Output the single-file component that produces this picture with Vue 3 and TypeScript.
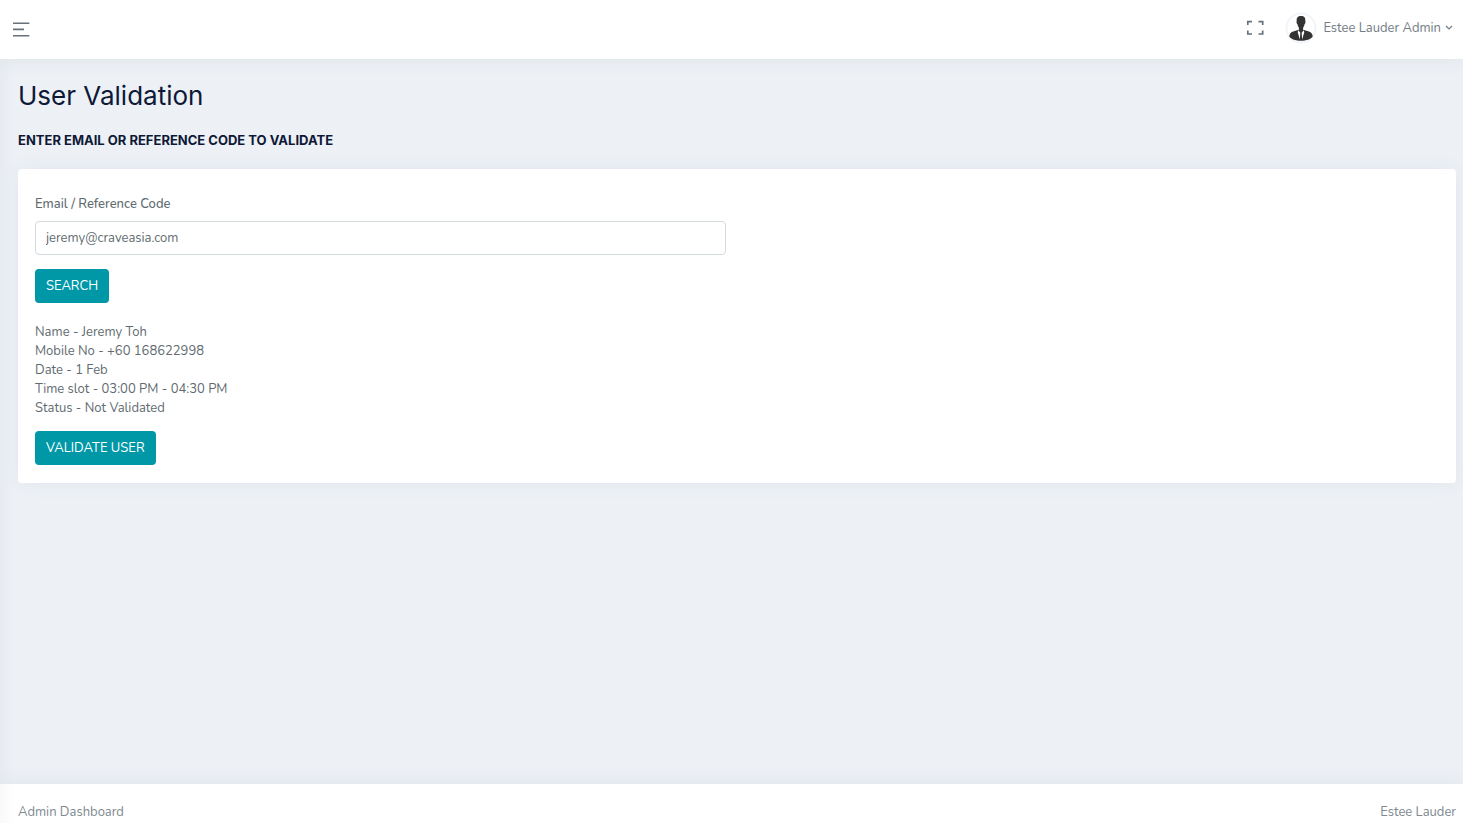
<script setup lang="ts">
import { ref } from 'vue'

interface Detail {
  label: string
  value: string
}

const query = ref<string>('jeremy@craveasia.com')
const details: Detail[] = [
  { label: 'Name', value: 'Jeremy Toh' },
  { label: 'Mobile No', value: '+60 168622998' },
  { label: 'Date', value: '1 Feb' },
  { label: 'Time slot', value: '03:00 PM - 04:30 PM' },
  { label: 'Status', value: 'Not Validated' },
]
</script>

<template>
  <div class="page">
    <header class="topbar">
      <button class="icon-button" type="button" aria-label="Toggle menu">
        <svg width="18" height="16" viewBox="0 0 18 16" fill="none" stroke="currentColor" stroke-width="1.6">
          <path d="M1 1.200h16.300M1 7.400h11M1 13.700h16.300" />
        </svg>
      </button>
      <div class="tools">
        <button class="icon-button" type="button" aria-label="Full screen">
          <svg width="18" height="16" viewBox="0 0 18 16" fill="none" stroke="currentColor" stroke-width="1.7">
            <path d="M1.800 5V1.600h4.200M12.500 1.600h4.200V5M16.700 10.600V14h-4.200M6 14H1.800v-3.400" />
          </svg>
        </button>
        <button class="account" type="button">
          <svg class="avatar" width="32" height="32" viewBox="0 0 32 32">
            <circle cx="16" cy="16" r="14.5" fill="#fff" stroke="#f1f5f9" stroke-width="2" />
            <path d="M16 4c-3.300 0-4.600 1.900-4.300 4.900-.5 1.400.1 2.700.7 3.200.3 2 .9 3 1.500 3.700v2l-5 1.500c-3.200.9-4.500 2.700-4.600 5.200 1.700 2.800 6.400 4.200 11.700 4.200s10-1.400 11.700-4.200c-.1-2.500-1.400-4.300-4.600-5.200l-5-1.500v-2c.6-.7 1.200-1.700 1.500-3.700.6-.5 1.200-1.800.7-3.200.3-3-1-4.900-4.300-4.900z" fill="#333" />
            <path d="M13.400 18.200 12.700 20.200l2.200 7.300.4-6.800zM18.600 18.200l.7 2-2.200 7.300-.4-6.800z" fill="#fff" />
          </svg>
          <span>Estee Lauder Admin</span>
          <svg class="chevron" width="8" height="6" viewBox="0 0 8 6" fill="none" stroke="currentColor" stroke-width="1.2">
            <path d="M1 1 4 4 7 1" />
          </svg>
        </button>
      </div>
    </header>

    <main class="content">
      <h1>User Validation</h1>
      <h2>ENTER EMAIL OR REFERENCE CODE TO VALIDATE</h2>
      <section class="card">
        <form class="search" @submit.prevent>
          <div class="field">
            <label for="query">Email / Reference Code</label>
            <input id="query" v-model="query" type="text" />
          </div>
          <button class="primary" type="submit">SEARCH</button>
        </form>
        <div class="details">
          <p v-for="item in details" :key="item.label">{{ item.label }} - {{ item.value }}</p>
        </div>
        <button class="primary" type="button">VALIDATE USER</button>
      </section>
    </main>

    <footer class="footer">
      <span>Admin Dashboard</span>
      <span>Estee Lauder</span>
    </footer>
  </div>
</template>

<style>
body {
  margin: 0;
  background: #edf1f6;
}
</style>

<style scoped>
.page {
  position: relative;
  display: flex;
  flex-direction: column;
  min-height: 100vh;
  background: #edf1f6;
  color: #5f6b70;
  font-family: Nunito, Lato, "Open Sans", sans-serif;
  font-size: 13px;
  line-height: 19px;
}

.page::before {
  content: "";
  position: absolute;
  top: 59px;
  bottom: 0;
  left: 0;
  width: 14px;
  background: linear-gradient(to right, rgba(50, 65, 80, 0.03), rgba(50, 65, 80, 0));
  pointer-events: none;
  z-index: 1;
}

button,
input {
  font: inherit;
  box-sizing: border-box;
}

.topbar {
  display: flex;
  align-items: center;
  justify-content: space-between;
  box-sizing: border-box;
  height: 59px;
  padding: 0 10px 0 12px;
  background: #fff;
  box-shadow: 0 0 20px rgba(50, 65, 80, 0.08);
}

.icon-button,
.account {
  display: flex;
  align-items: center;
  padding: 0;
  border: 0;
  background: none;
  color: #66727a;
  cursor: pointer;
}

.tools {
  display: flex;
  align-items: center;
  gap: 21px;
  padding-bottom: 3px;
}

.account {
  color: #727c84;
}

.avatar {
  margin-right: 6px;
}

.chevron {
  margin-left: 4px;
}

.content {
  flex: 1;
  padding: 21px 7px 20px 18px;
}

h1,
h2 {
  margin: 0;
  color: #0d1936;
  font-family: Inter, sans-serif;
}

h1 {
  font-size: 26px;
  font-weight: 400;
  line-height: 32px;
}

h2 {
  margin: 20px 0;
  font-size: 13px;
  font-weight: 700;
  line-height: 17px;
}

.card {
  padding: 26px 17px 18px;
  border-radius: 4px;
  background: #fff;
  box-shadow: 0 0 20px rgba(50, 65, 80, 0.06);
}

.search {
  display: grid;
  grid-template-columns: 1fr 1fr;
  gap: 14px 22px;
}

.field {
  display: flex;
  flex-direction: column;
  gap: 7px;
}

.field label {
  font-weight: 500;
}

.field input {
  width: 100%;
  height: 34px;
  padding: 0 10px;
  border: 1px solid #d3dade;
  border-radius: 4px;
  background: #fff;
  color: #5f6b70;
}

.primary {
  height: 34px;
  padding: 0 11px;
  border: 0;
  border-radius: 4px;
  background: #0097a7;
  color: #fff;
  cursor: pointer;
}

.search .primary {
  grid-column: 1;
  justify-self: start;
}

.details {
  margin: 20px 0 13px;
}

.details p {
  margin: 0;
}

.footer {
  display: flex;
  justify-content: space-between;
  padding: 19px 7px 1px 18px;
  background: #fff;
  color: #7e888f;
  box-shadow: 0 0 20px rgba(50, 65, 80, 0.08);
}
</style>
